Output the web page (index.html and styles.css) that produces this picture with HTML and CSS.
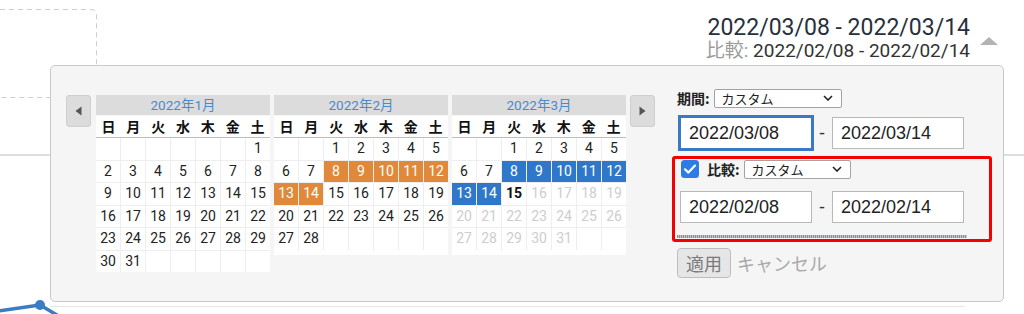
FILE: index.html
```html
<!DOCTYPE html>
<html lang="ja">
<head>
<meta charset="utf-8">
<title>期間</title>
<link rel="stylesheet" href="styles.css">
</head>
<body>
<div class="page">
  <svg class="chart" width="1024" height="314" viewBox="0 0 1024 314">
    <path class="dash" d="M0 9.5 H91 Q96.5 9.5 96.5 15 V92 Q96.5 97.5 91 97.5 H0"/>
    <line class="grid" x1="0" y1="155" x2="1024" y2="155"/>
    <line class="base" x1="50" y1="306.5" x2="965" y2="306.5"/>
    <polyline class="series" points="-2,311 40,305 62,318"/>
    <circle class="dot" cx="40" cy="305" r="5"/>
  </svg>

  <header class="range">
    <div class="range-text">
      <div class="range-main">2022/03/08 - 2022/03/14</div>
      <div class="range-compare"><span class="cmp-label">比較:</span> 2022/02/08 - 2022/02/14</div>
    </div>
    <span class="range-toggle"></span>
  </header>

  <div class="picker">
    <div class="cals">
      <button class="nav prev" type="button"><svg width="7" height="10" viewBox="0 0 7 10"><path d="M6.5 0.5 L0.5 5 L6.5 9.5 Z"/></svg></button>

      <div class="cal">
        <div class="cal-title">2022年1月</div>
        <div class="cal-dow"><span>日</span><span>月</span><span>火</span><span>水</span><span>木</span><span>金</span><span>土</span></div>
        <div class="cal-days">
          <span></span><span></span><span></span><span></span><span></span><span></span><span>1</span>
          <span>2</span><span>3</span><span>4</span><span>5</span><span>6</span><span>7</span><span>8</span>
          <span>9</span><span>10</span><span>11</span><span>12</span><span>13</span><span>14</span><span>15</span>
          <span>16</span><span>17</span><span>18</span><span>19</span><span>20</span><span>21</span><span>22</span>
          <span>23</span><span>24</span><span>25</span><span>26</span><span>27</span><span>28</span><span>29</span>
          <span>30</span><span>31</span><span></span><span></span><span></span><span></span><span></span>
        </div>
      </div>

      <div class="cal">
        <div class="cal-title">2022年2月</div>
        <div class="cal-dow"><span>日</span><span>月</span><span>火</span><span>水</span><span>木</span><span>金</span><span>土</span></div>
        <div class="cal-days short">
          <span></span><span></span><span>1</span><span>2</span><span>3</span><span>4</span><span>5</span>
          <span>6</span><span>7</span><span class="sel-o">8</span><span class="sel-o">9</span><span class="sel-o">10</span><span class="sel-o">11</span><span class="sel-o">12</span>
          <span class="sel-o">13</span><span class="sel-o">14</span><span>15</span><span>16</span><span>17</span><span>18</span><span>19</span>
          <span>20</span><span>21</span><span>22</span><span>23</span><span>24</span><span>25</span><span>26</span>
          <span>27</span><span>28</span><span></span><span></span><span></span><span></span><span></span>
        </div>
      </div>

      <div class="cal">
        <div class="cal-title">2022年3月</div>
        <div class="cal-dow"><span>日</span><span>月</span><span>火</span><span>水</span><span>木</span><span>金</span><span>土</span></div>
        <div class="cal-days short">
          <span></span><span></span><span>1</span><span>2</span><span>3</span><span>4</span><span>5</span>
          <span>6</span><span>7</span><span class="sel-b">8</span><span class="sel-b">9</span><span class="sel-b">10</span><span class="sel-b">11</span><span class="sel-b">12</span>
          <span class="sel-b">13</span><span class="sel-b">14</span><span class="today">15</span><span class="future">16</span><span class="future">17</span><span class="future">18</span><span class="future">19</span>
          <span class="future">20</span><span class="future">21</span><span class="future">22</span><span class="future">23</span><span class="future">24</span><span class="future">25</span><span class="future">26</span>
          <span class="future">27</span><span class="future">28</span><span class="future">29</span><span class="future">30</span><span class="future">31</span><span></span><span></span>
        </div>
      </div>

      <button class="nav next" type="button"><svg width="7" height="10" viewBox="0 0 7 10"><path d="M0.5 0.5 L6.5 5 L0.5 9.5 Z"/></svg></button>
    </div>

    <div class="form">
      <div class="row-sel">
        <span class="lbl">期間:</span>
        <div class="select wide">カスタム<svg class="chev" width="10" height="6" viewBox="0 0 10 6"><path d="M1 1 L5 5 L9 1"/></svg></div>
      </div>
      <div class="row-dates first">
        <input class="date focus" type="text" value="2022/03/08" readonly>
        <span class="sep">-</span>
        <input class="date" type="text" value="2022/03/14" readonly>
      </div>

      <div class="compare">
        <div class="row-sel">
          <span class="check"><svg width="18" height="18" viewBox="0 0 18 18"><rect width="18" height="18" rx="3.5"/><path d="M4 9.3 L7.4 12.6 L14 5.6"/></svg></span>
          <span class="lbl">比較:</span>
          <div class="select narrow">カスタム<svg class="chev" width="10" height="6" viewBox="0 0 10 6"><path d="M1 1 L5 5 L9 1"/></svg></div>
        </div>
        <div class="row-dates second">
          <input class="date" type="text" value="2022/02/08" readonly>
          <span class="sep">-</span>
          <input class="date" type="text" value="2022/02/14" readonly>
        </div>
        <div class="hatch"></div>
      </div>

      <div class="actions">
        <button class="apply" type="button">適用</button>
        <span class="cancel">キャンセル</span>
      </div>
    </div>
  </div>
</div>
</body>
</html>
```

FILE: styles.css
```css
* { box-sizing: border-box; margin: 0; padding: 0; }

html, body {
  width: 1024px;
  height: 314px;
  overflow: hidden;
  background: #fff;
}

body {
  font-family: Roboto, "Noto Sans CJK JP", sans-serif;
  color: #222;
}

.page {
  position: relative;
  width: 1024px;
  height: 314px;
  display: grid;
  grid-template-columns: 1024px;
  grid-template-rows: 314px;
}

.chart, .range { grid-area: 1 / 1; }

.chart { display: block; }
.dash { fill: none; stroke: #cdcdcd; stroke-width: 1; stroke-dasharray: 5 4; }
.grid { stroke: #dedede; stroke-width: 2; }
.base { stroke: #e6e6e6; stroke-width: 1; }
.series { fill: none; stroke: #3a7dc2; stroke-width: 3.5; stroke-linejoin: round; }
.dot { fill: #3a7dc2; }

/* header range */
.range {
  display: flex;
  justify-content: flex-end;
  align-items: flex-start;
  align-self: start;
  padding: 14px 26px 0 0;
}
.range-text { text-align: right; }
.range-main {
  font-size: 23px;
  line-height: 27px;
  color: #27303c;
}
.range-compare {
  font-size: 19px;
  line-height: 20px;
  color: #333;
}
.cmp-label { color: #9c9c9c; }
.range-toggle {
  width: 0;
  height: 0;
  border-left: 9px solid transparent;
  border-right: 9px solid transparent;
  border-bottom: 8px solid #b3b3b3;
  margin: 23px 0 0 10px;
}

/* picker popup */
.picker {
  position: absolute;
  left: 50px;
  top: 65px;
  width: 954px;
  height: 237px;
  background: #f5f5f5;
  border: 1px solid #c9c9c9;
  border-radius: 5px;
  display: flex;
  align-items: flex-start;
  gap: 22px;
  padding: 22px 0 0 15px;
}

.cals {
  display: flex;
  align-items: flex-start;
  gap: 4px;
  margin-top: 7px;
}

.nav {
  width: 25px;
  height: 32px;
  background: #dcdcdc;
  border: 1px solid #cfcfcf;
  border-radius: 3px;
  display: flex;
  align-items: center;
  justify-content: center;
}
.nav svg path { fill: #555; }
.nav.prev { margin-right: 1px; }

.cal { width: 174px; }

.cal-title {
  height: 20px;
  background: #dcdcdc;
  color: #4a89cf;
  font-size: 13.5px;
  line-height: 20px;
  text-align: center;
}

.cal-dow {
  display: grid;
  grid-template-columns: repeat(7, 1fr);
  height: 22px;
  margin-top: 1px;
  background: #fff;
  border-bottom: 1px solid #bdbdbd;
  font-family: "Noto Sans CJK JP", sans-serif;
  font-weight: bold;
  font-size: 14px;
  line-height: 21px;
  text-align: center;
  color: #111;
}

.cal-days {
  display: grid;
  grid-template-columns: repeat(7, 1fr);
  grid-auto-rows: 21.5px;
  gap: 1px;
  background: #eeeeee;
  font-size: 14px;
}
.cal-days.short { border-bottom: 5px solid #fff; }

.cal-days span {
  background: #fff;
  text-align: center;
  line-height: 21.5px;
  color: #222;
}
.cal-days span.sel-o { background: #e0893a; color: #fff; }
.cal-days span.sel-b { background: #2f78c9; color: #fff; }
.cal-days span.today { font-weight: bold; color: #111; }
.cal-days span.future { color: #cdcdcd; }

/* form */
.form {
  display: flex;
  flex-direction: column;
  width: 290px;
}

.row-sel {
  display: flex;
  align-items: center;
  height: 20px;
  gap: 4px;
}

.lbl {
  font-family: "Noto Sans CJK JP", sans-serif;
  font-weight: bold;
  font-size: 14px;
  color: #222;
  line-height: 20px;
}

.select {
  height: 19px;
  background: #fff;
  border: 1px solid #a3a3a3;
  border-radius: 2px;
  display: flex;
  align-items: center;
  justify-content: space-between;
  padding: 0 8px 0 7px;
  font-family: "Noto Sans CJK JP", sans-serif;
  font-size: 13px;
  color: #222;
}
.select.wide { width: 128px; }
.select.narrow { width: 107px; }
.chev { fill: none; stroke: #222; stroke-width: 1.6; }

.row-dates {
  display: flex;
  align-items: center;
  padding-left: 3px;
}
.row-dates.first { margin-top: 9px; }
.row-dates.second { margin-top: 12px; padding-left: 2px; }

.date {
  width: 132px;
  height: 32px;
  border: 1px solid #b9b9b9;
  background: #fff;
  padding: 0 0 0 8px;
  font-family: "Liberation Sans", Arial, sans-serif;
  font-size: 18px;
  color: #222;
  outline: none;
}
.date.focus {
  border-color: #3a78c8;
  box-shadow: 0 0 0 2px #3a78c8;
}

.sep {
  width: 20px;
  text-align: center;
  font-family: "Liberation Sans", Arial, sans-serif;
  font-size: 18px;
  color: #333;
}

.compare {
  margin: 7px 0 0 -5px;
  width: 320px;
  border: 3px solid #f30000;
  border-radius: 3px;
  padding: 0 0 1px 3px;
}
.compare .row-sel { gap: 4px; }
.check {
  display: flex;
  margin: 0 4px 0 3px;
}
.check rect { fill: #2d7be5; }
.check path { fill: none; stroke: #fff; stroke-width: 2.2; stroke-linecap: round; stroke-linejoin: round; }

.hatch {
  margin: 12px 0 0 -1px;
  width: 290px;
  height: 3px;
  background: repeating-linear-gradient(90deg, #8c8c8c 0 1px, #c4c4c4 1px 2px);
}

.actions {
  display: flex;
  align-items: center;
  gap: 6px;
  margin-top: 6px;
}
.apply {
  width: 54px;
  height: 30px;
  background: #e6e6e6;
  border: 1px solid #bdbdbd;
  border-radius: 4px;
  font-family: "Noto Sans CJK JP", sans-serif;
  font-size: 18px;
  color: #7a7a7a;
}
.cancel {
  font-family: "Noto Sans CJK JP", sans-serif;
  font-size: 18px;
  color: #aaa;
}
```
